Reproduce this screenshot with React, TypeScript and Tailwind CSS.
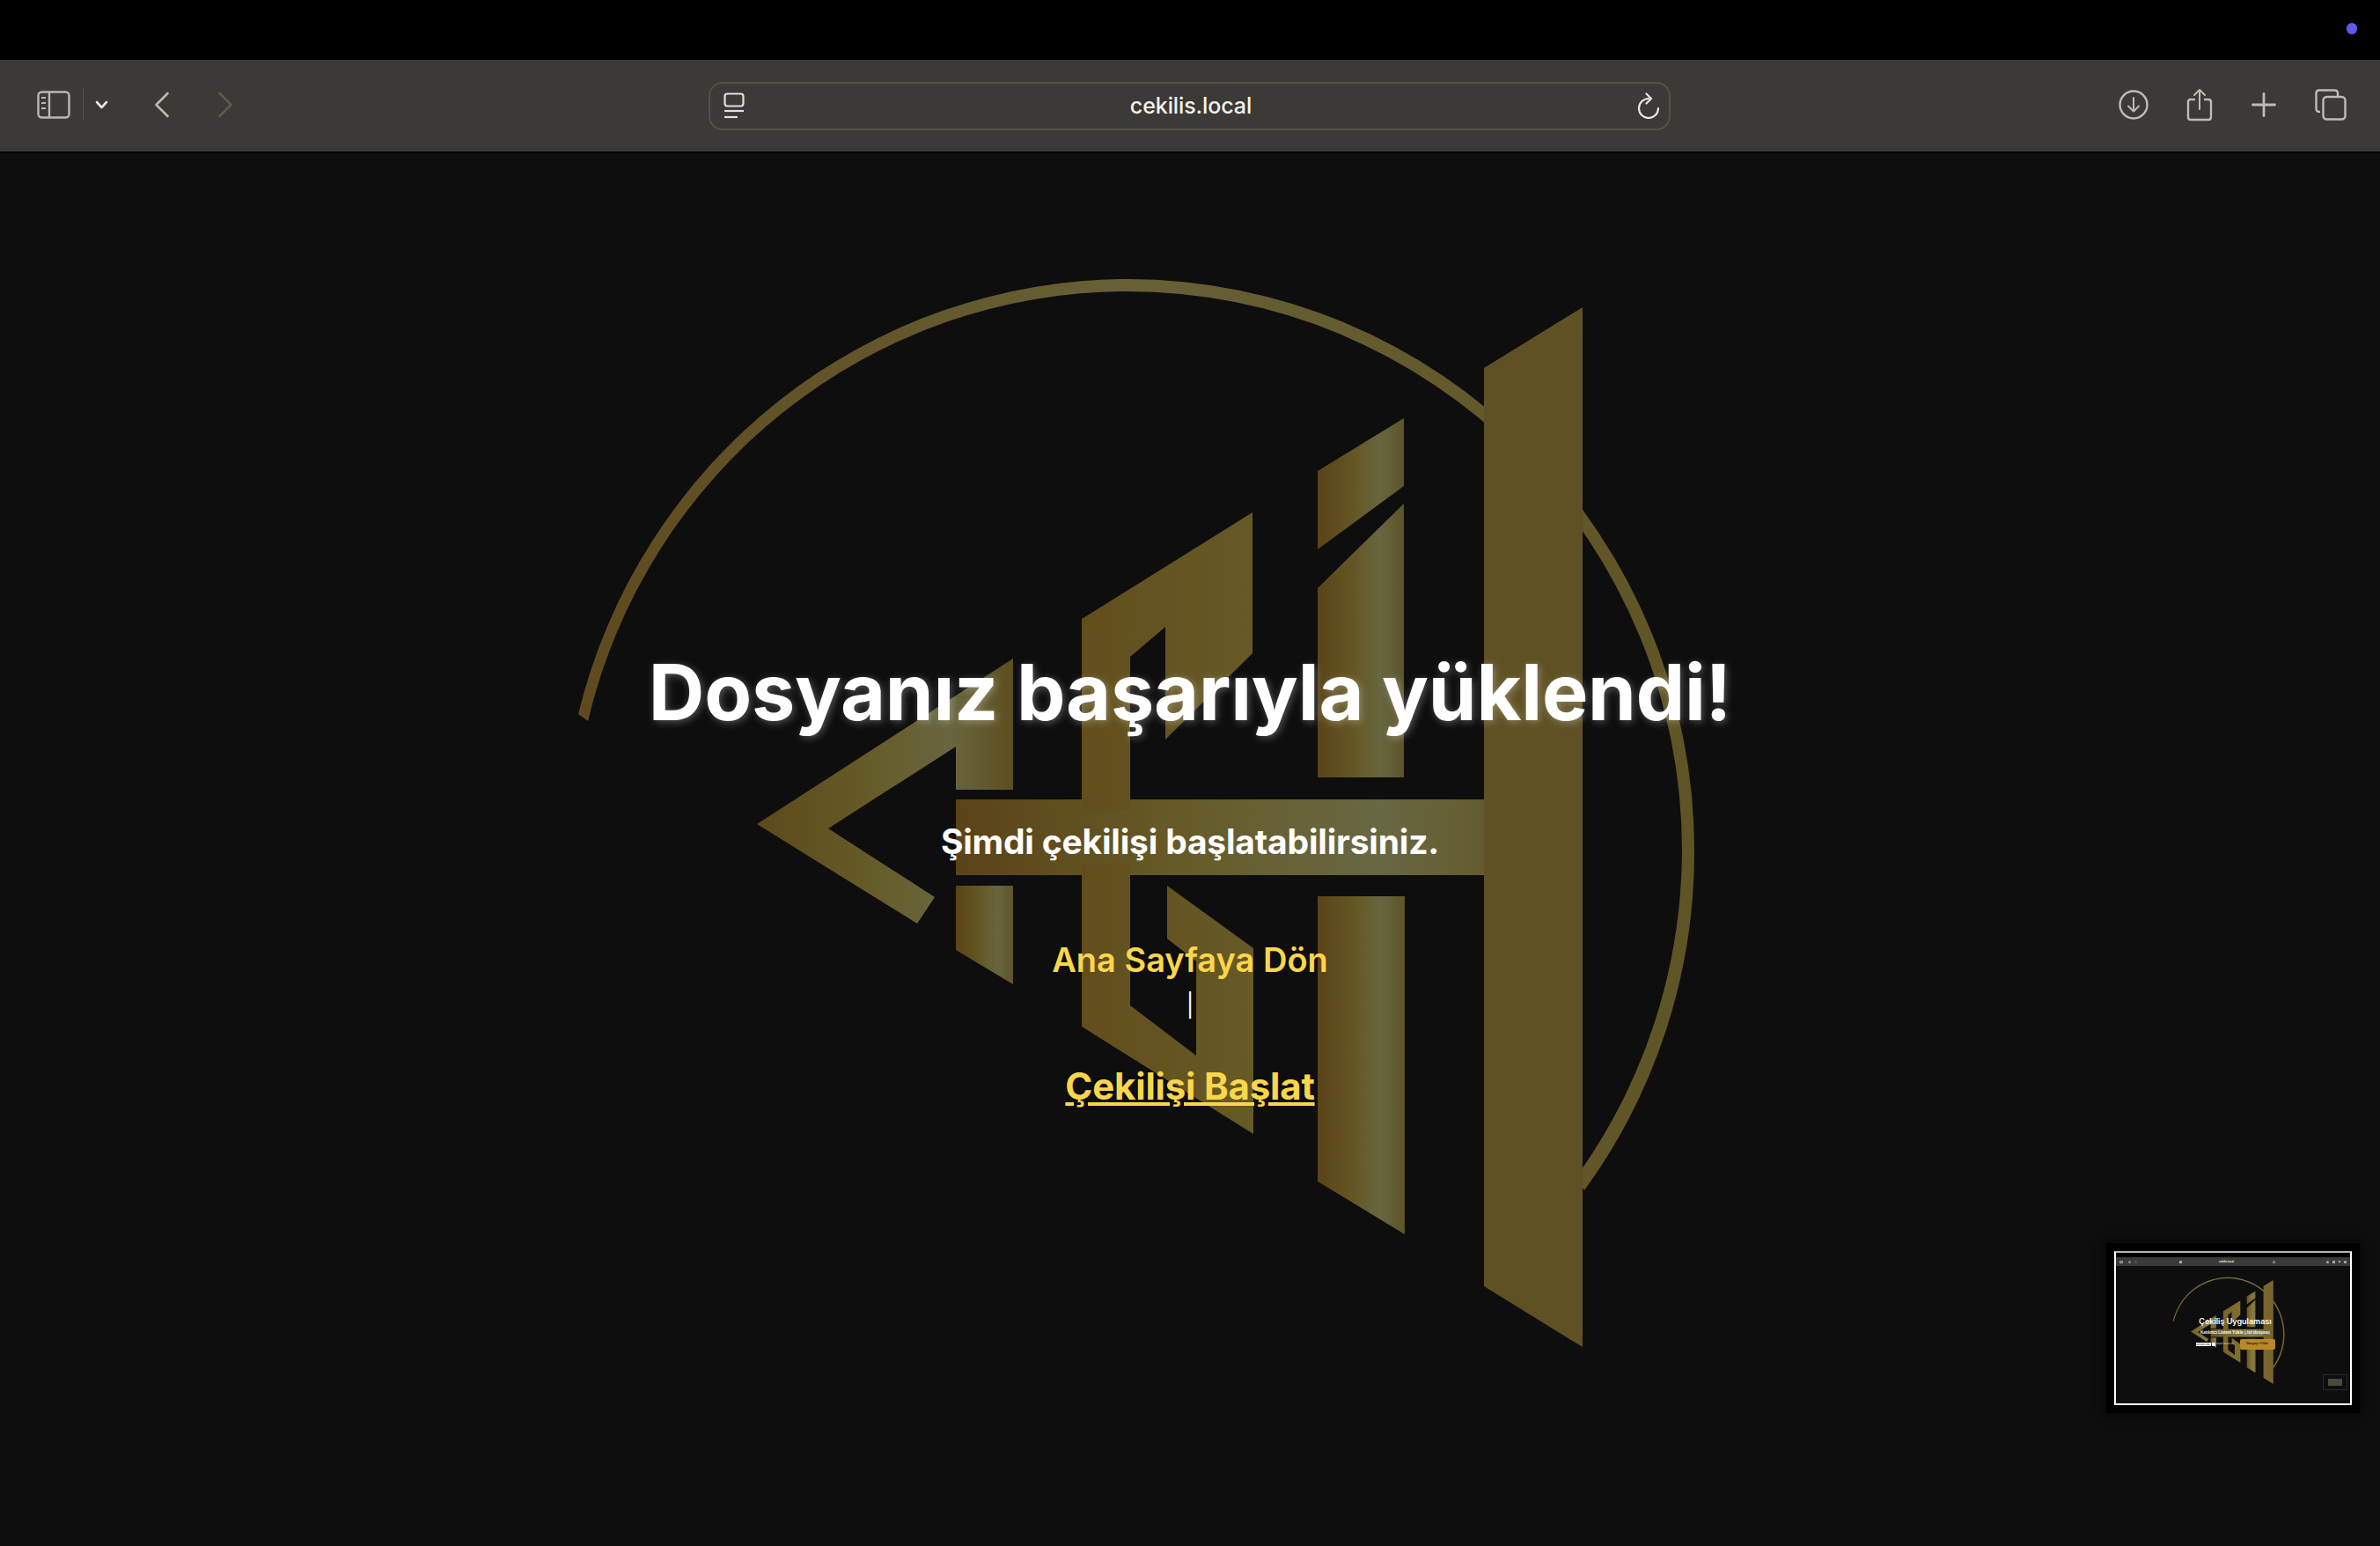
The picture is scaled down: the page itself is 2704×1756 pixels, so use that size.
const Logo = ({ id, className }: { id: string; className: string }) => (
  <svg viewBox="640 300 1300 1250" className={className} aria-hidden="true">
    <defs>
      <linearGradient id={`${id}-bar`} x1="0" y1="0" x2="1" y2="0">
        <stop offset="0" stopColor="#5a4318" />
        <stop offset="0.4" stopColor="#645622" />
        <stop offset="0.72" stopColor="#676640" />
        <stop offset="1" stopColor="#5e5428" />
      </linearGradient>
      <linearGradient id={`${id}-wide`} x1="0" y1="0" x2="1" y2="0">
        <stop offset="0" stopColor="#5a4318" />
        <stop offset="0.4" stopColor="#665a26" />
        <stop offset="0.78" stopColor="#686844" />
        <stop offset="1" stopColor="#635a2c" />
      </linearGradient>
      <linearGradient id={`${id}-arrow`} x1="0" y1="0" x2="1" y2="0">
        <stop offset="0" stopColor="#5c491a" />
        <stop offset="0.45" stopColor="#655c28" />
        <stop offset="0.75" stopColor="#686640" />
        <stop offset="1" stopColor="#5e4e1e" />
      </linearGradient>
      <linearGradient id={`${id}-hook`} x1="0" y1="0" x2="1" y2="0">
        <stop offset="0" stopColor="#624e1c" />
        <stop offset="1" stopColor="#665a26" />
      </linearGradient>
      <linearGradient id={`${id}-ring`} x1="0" y1="0" x2="1" y2="0">
        <stop offset="0" stopColor="#5f4a1f" />
        <stop offset="0.5" stopColor="#676036" />
        <stop offset="1" stopColor="#5f5425" />
      </linearGradient>
    </defs>
    {/* ring, cut on a slant at its left end */}
    <path
      fill={`url(#${id}-ring)`}
      d="M657 811 A644 649 0 0 1 1282 317 A644 649 0 0 1 1925 966 A644 649 0 0 1 1800 1352 L1790 1338 A630 635 0 0 0 1911 966 A630 635 0 0 0 1280 331 A630 635 0 0 0 668 819 Z"
    />
    {/* arrow */}
    <path fill={`url(#${id}-arrow)`} d="M860 936 L1151 748 L1151 897 L1086 897 L1086 848 L941 941 L1062 1019 L1042 1049 Z" />
    {/* short piece under the arrow */}
    <path fill={`url(#${id}-bar)`} d="M1086 1006 H1151 V1118 L1086 1079 Z" />
    {/* horizontal bar */}
    <path fill={`url(#${id}-wide)`} d="M1086 908 H1700 V994 H1086 Z" />
    {/* upper hook */}
    <path fill={`url(#${id}-hook)`} d="M1229 703 L1423 582 V742 L1324 840 V712 L1284 746 V920 H1229 Z" />
    {/* lower hook */}
    <path fill={`url(#${id}-hook)`} d="M1229 980 H1284 V1142 L1359 1199 V1092 L1326 1066 V1006 L1424 1077 V1288 L1229 1166 Z" />
    {/* middle column */}
    <path fill={`url(#${id}-bar)`} d="M1497 535 L1595 475 V552 L1497 624 Z" />
    <path fill={`url(#${id}-bar)`} d="M1497 668 L1595 572 V883 H1497 Z" />
    <path fill={`url(#${id}-bar)`} d="M1497 1018 H1596 V1402 L1497 1342 Z" />
    {/* tall column */}
    <path fill="#5f5124" d="M1686 418 L1798 349 V1530 L1686 1461 Z" />
  </svg>
);

const Toolbar = ({ mini }: { mini?: boolean }) => {
  if (mini) {
    return (
      <div className="flex h-[10px] shrink-0 items-center bg-[#3b3a36] px-[4px]">
        <div className="h-[3px] w-[4px] rounded-[1px] border-[0.5px] border-[#bdbcb8]" />
        <div className="ml-[6px] h-[3px] w-[3px] rounded-full bg-[#8a8985]" />
        <div className="ml-[4px] h-[3px] w-[3px] rounded-full bg-[#55544f]" />
        <div className="ml-[48px] h-[3px] w-[3px] bg-[#aaa9a5]" />
        <span className="ml-[42px] text-[3px] font-semibold text-white">cekilis.local</span>
        <div className="ml-[44px] h-[3px] w-[3px] rounded-full border-[0.5px] border-[#bdbcb8]" />
        <div className="ml-auto flex gap-[4px]">
          <div className="h-[3px] w-[3px] rounded-full bg-[#aaa9a5]" />
          <div className="h-[3px] w-[3px] bg-[#aaa9a5]" />
          <div className="h-[2px] w-[2px] bg-[#aaa9a5]" />
          <div className="h-[3px] w-[3px] rounded-[1px] bg-[#aaa9a5]" />
        </div>
      </div>
    );
  }
  return (
    <div className="flex h-[106px] shrink-0 items-center border-b-2 border-[#050505] bg-[#3b3a36]">
      <div className="flex w-[805px] items-center pb-[2px] pl-[42px]">
        <svg width="38" height="32" viewBox="0 0 38 32" fill="none" stroke="#b9b8b4" strokeWidth="2.4">
          <rect x="1.5" y="1.5" width="35" height="29" rx="4" />
          <path d="M14 2V30" />
          <path d="M5 8H10M5 14H10M5 20H10" strokeWidth="2" />
        </svg>
        <div className="ml-[14px] h-[36px] w-px bg-[#55544f]" />
        <svg className="ml-[13px]" width="15" height="10" viewBox="0 0 15 10" fill="none" stroke="#e6e5e1" strokeWidth="2.6" strokeLinecap="round" strokeLinejoin="round">
          <path d="M2 2L7.5 8L13 2" />
        </svg>
        <svg className="ml-[52px]" width="18" height="30" viewBox="0 0 18 30" fill="none" stroke="#b9b8b4" strokeWidth="2.6" strokeLinecap="round" strokeLinejoin="round">
          <path d="M15.5 2L2.5 15L15.5 28" />
        </svg>
        <svg className="ml-[54px]" width="18" height="30" viewBox="0 0 18 30" fill="none" stroke="#5c5b56" strokeWidth="2.6" strokeLinecap="round" strokeLinejoin="round">
          <path d="M2.5 2L15.5 15L2.5 28" />
        </svg>
      </div>
      <div className="relative flex h-[55px] w-[1093px] items-center justify-between rounded-[16px] border-2 border-[#52514c] pl-[15px] pr-[10px]">
        <svg width="24" height="30" viewBox="0 0 24 30" fill="none" stroke="#e2e1dd" strokeWidth="2.2">
          <rect x="1.5" y="1.5" width="21" height="14" rx="3" />
          <path d="M1 21H23" />
          <path d="M1 28H16" />
        </svg>
        <span className="pt-[2px] text-[25px] font-medium tracking-[-0.1px] text-[#f2f2f0]">cekilis.local</span>
        <svg width="26" height="30" viewBox="0 0 26 30" fill="none" stroke="#e6e5e1" strokeWidth="2.2" strokeLinecap="round" strokeLinejoin="round">
          <path d="M13 7A11 11 0 1 0 24 18" />
          <path d="M10.5 1.5L16 7L10.5 12.5" />
        </svg>
      </div>
      <div className="flex flex-1 items-center pb-[2px] pl-[509px]">
        <svg width="34" height="34" viewBox="0 0 34 34" fill="none" stroke="#bdbcb8" strokeWidth="2.4" strokeLinecap="round" strokeLinejoin="round">
          <circle cx="17" cy="17" r="15.5" />
          <path d="M17 9V24M11 18.5L17 24.5L23 18.5" strokeWidth="2" />
        </svg>
        <svg className="ml-[43px]" width="30" height="38" viewBox="0 0 30 38" fill="none" stroke="#bdbcb8" strokeWidth="2.4" strokeLinecap="round" strokeLinejoin="round">
          <path d="M9 13H5Q2 13 2 16V33Q2 36 5 36H25Q28 36 28 33V16Q28 13 25 13H21" />
          <path d="M15 2V24M9 8L15 2L21 8" strokeWidth="2" />
        </svg>
        <svg className="ml-[44px]" width="28" height="28" viewBox="0 0 28 28" fill="none" stroke="#bdbcb8" strokeWidth="2.8" strokeLinecap="round">
          <path d="M14 1.5V26.5M1.5 14H26.5" />
        </svg>
        <svg className="ml-[44px]" width="36" height="36" viewBox="0 0 36 36" fill="none" stroke="#bdbcb8" strokeWidth="2.4">
          <path d="M6 26H5Q1.5 26 1.5 22V5Q1.5 1.5 5 1.5H22Q26 1.5 26 5V8" />
          <rect x="9.5" y="9" width="25" height="25.5" rx="4" />
        </svg>
      </div>
    </div>
  );
};

const Thumbnail = () => (
  <div className="absolute left-[2402px] top-[1247px] flex h-[175px] w-[270px] flex-col overflow-hidden border-2 border-white border-t-[#b5b5b5] bg-[#0e0e0e] shadow-[0_0_0_9px_#000,0_0_10px_10px_#060606]">
    <div className="h-[5px] shrink-0 bg-black" />
    <Toolbar mini />
    <div className="relative flex-1">
      <Logo id="mini" className="absolute left-[63px] top-[11px] h-[125px] w-[130px] brightness-125" />
      <div className="relative flex flex-col items-center pl-[5px] pt-[56px] text-white">
        <h2 className="text-[9px] font-semibold leading-[14px]">Çekiliş Uygulaması</h2>
        <p className="mt-[3px] text-[4.6px] font-semibold leading-[6px]">Katılımcı Listeni Yükle (.txt dosyası)</p>
        <div className="mt-[4px] flex w-[90px] items-center">
          <span className="bg-white px-[1px] text-[2.6px] leading-[4px] text-black">Dosyayı Seç</span>
          <span className="ml-[1px] h-[4px] w-[4px] bg-white" />
          <span className="ml-[1px] text-[2.4px] text-[#ccc]">Seçilen dosya yok</span>
          <button className="ml-auto h-[12px] w-[40px] rounded-[2px] bg-[#b8892b] text-[3.6px] font-semibold text-[#1c1608]">
            Dosyayı Yükle
          </button>
        </div>
      </div>
      <div className="absolute bottom-[15px] right-[3px] flex h-[18px] w-[28px] items-center justify-center border border-[#2a2a2a]">
        <div className="h-[8px] w-[16px] bg-[#4a4a3c]" />
      </div>
    </div>
  </div>
);

export default function App() {
  return (
    <div className="relative flex min-h-screen flex-col bg-[#0e0e0e] font-['Inter',sans-serif]">
      <div className="flex h-[68px] shrink-0 items-center justify-end bg-black pb-[4px] pr-[26px]">
        <div className="h-[13px] w-[12px] rounded-full bg-[#5e5ce6]" />
      </div>
      <Toolbar />

      <main className="relative flex flex-1 flex-col items-center overflow-hidden">
        <Logo id="page" className="absolute left-[640px] top-[126px] h-[1250px] w-[1300px]" />
        <div className="relative flex flex-col items-center pt-[554px] text-center">
          <h1 className="text-[88px] font-bold leading-[116px] tracking-[-0.2px] text-white [text-shadow:2px_2px_10px_rgba(255,255,255,0.3)]">
            Dosyanız başarıyla yüklendi!
          </h1>
          <p className="mt-[86px] text-[39px] font-bold leading-[52px] tracking-[-0.2px] text-white">
            Şimdi çekilişi başlatabilirsiniz.
          </p>
          <a className="mt-[82px] text-[38px] font-semibold leading-[52px] text-[#fbd64a]">
            Ana Sayfaya Dön
          </a>
          <span className="text-[26px] leading-[52px] text-white">|</span>
          <a className="mt-[40px] text-[42px] font-bold leading-[52px] tracking-[-0.2px] text-[#fbd64a] underline">
            Çekilişi Başlat
          </a>
        </div>
        <Thumbnail />
      </main>
    </div>
  );
}
